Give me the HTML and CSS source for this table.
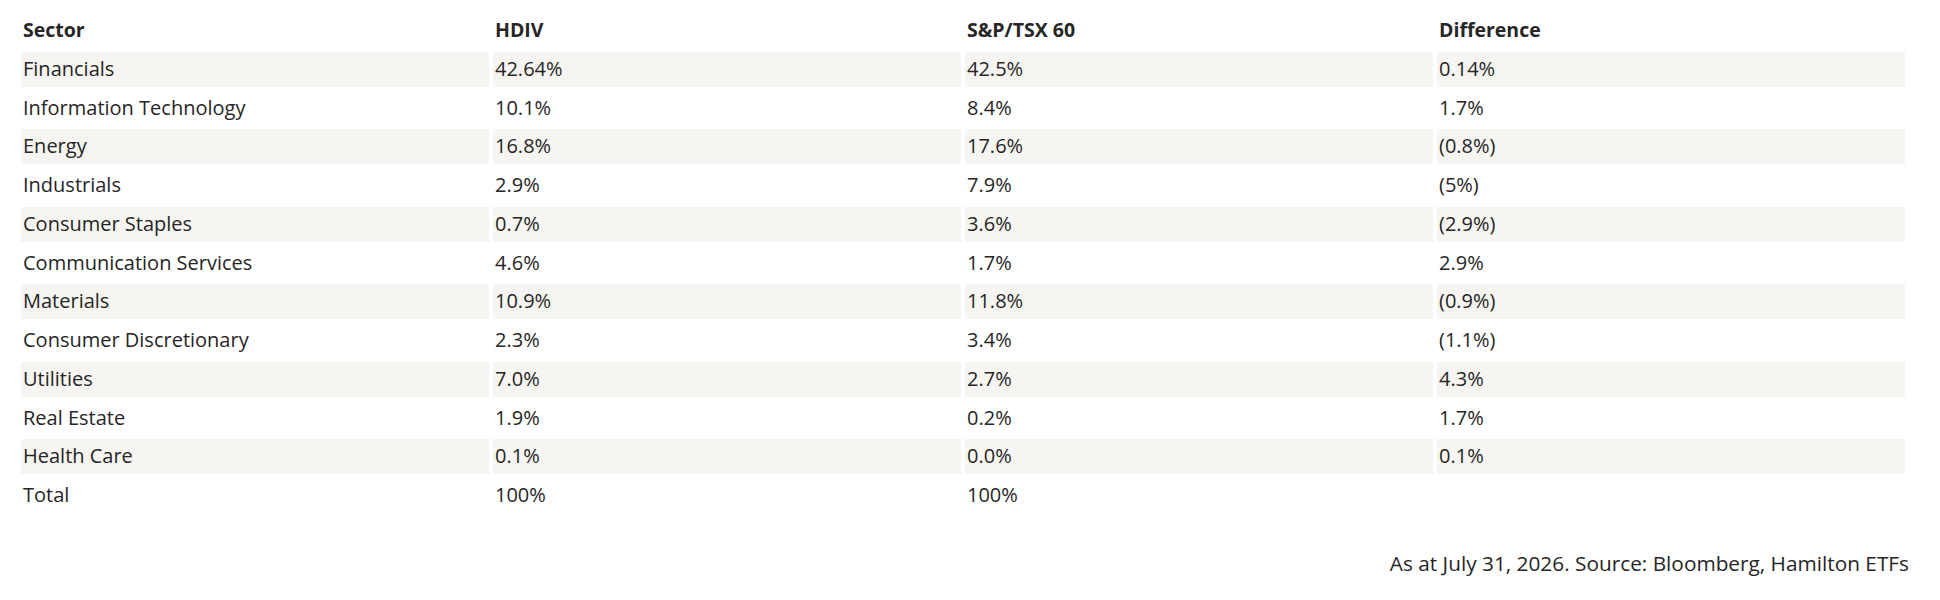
FILE: index.html
```html
<!DOCTYPE html>
<html lang="en">
<head>
<meta charset="utf-8">
<title>Sector allocation</title>
<link rel="stylesheet" href="styles.css">
</head>
<body>
<div class="wrap">
  <table class="sector-table">
    <thead>
      <tr><th>Sector</th><th>HDIV</th><th>S&amp;P/TSX 60</th><th>Difference</th></tr>
    </thead>
    <tbody>
      <tr><td>Financials</td><td>42.64%</td><td>42.5%</td><td>0.14%</td></tr>
      <tr><td>Information Technology</td><td>10.1%</td><td>8.4%</td><td>1.7%</td></tr>
      <tr><td>Energy</td><td>16.8%</td><td>17.6%</td><td>(0.8%)</td></tr>
      <tr><td>Industrials</td><td>2.9%</td><td>7.9%</td><td>(5%)</td></tr>
      <tr><td>Consumer Staples</td><td>0.7%</td><td>3.6%</td><td>(2.9%)</td></tr>
      <tr><td>Communication Services</td><td>4.6%</td><td>1.7%</td><td>2.9%</td></tr>
      <tr><td>Materials</td><td>10.9%</td><td>11.8%</td><td>(0.9%)</td></tr>
      <tr><td>Consumer Discretionary</td><td>2.3%</td><td>3.4%</td><td>(1.1%)</td></tr>
      <tr><td>Utilities</td><td>7.0%</td><td>2.7%</td><td>4.3%</td></tr>
      <tr><td>Real Estate</td><td>1.9%</td><td>0.2%</td><td>1.7%</td></tr>
      <tr><td>Health Care</td><td>0.1%</td><td>0.0%</td><td>0.1%</td></tr>
      <tr class="total"><td>Total</td><td>100%</td><td>100%</td><td></td></tr>
    </tbody>
  </table>
  <p class="source">As at July 31, 2026. Source: Bloomberg, Hamilton ETFs</p>
</div>
</body>
</html>
```
FILE: styles.css
```css
html, body {
  margin: 0;
  padding: 0;
  background: #ffffff;
}
body {
  font-family: "Open Sans", "Noto Sans", sans-serif;
  font-size: 20px;
  color: #262626;
}
.wrap {
  padding: 9px 31px 0 17px;
}
.sector-table {
  width: 100%;
  table-layout: fixed;
  border-collapse: separate;
  border-spacing: 4px;
}
.sector-table th,
.sector-table td {
  text-align: left;
  padding: 5px 2px;
  line-height: 24.75px;
  height: 24.75px;
  white-space: nowrap;
}
.sector-table th {
  font-weight: 700;
  font-size: 19.5px;
}
.sector-table td {
  font-weight: 400;
}
.sector-table tbody tr:nth-child(odd) td {
  background: #f6f5f1;
}
.sector-table tbody tr.total td {
  background: transparent;
}
.source {
  margin: 34px 0 0;
  text-align: right;
  font-size: 20.8px;
  line-height: 25px;
}
```
